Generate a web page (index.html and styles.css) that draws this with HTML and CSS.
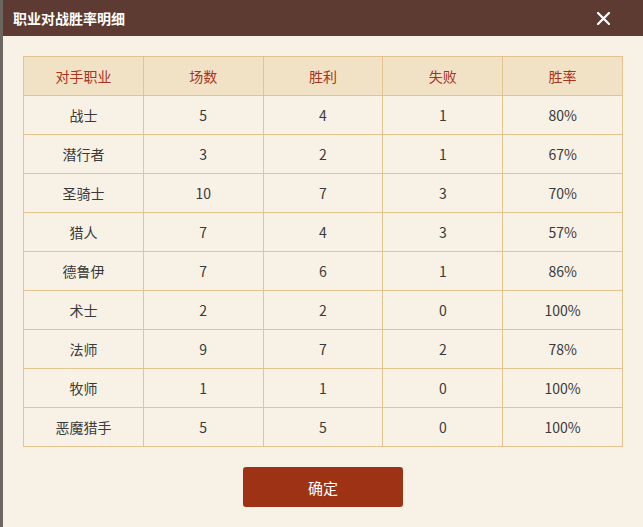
FILE: index.html
```html
<!DOCTYPE html>
<html lang="zh">
<head>
<meta charset="utf-8">
<link rel="stylesheet" href="styles.css">
</head>
<body>
<div class="page">
  <div class="backdrop"></div>
  <div class="dialog">
    <div class="dialog-head">
      <span class="title">职业对战胜率明细</span>
      <svg class="close" width="13" height="13" viewBox="0 0 13 13"><path d="M1 1L12 12M12 1L1 12" stroke="#fff" stroke-width="2.2" stroke-linecap="square"/></svg>
    </div>
    <div class="dialog-body">
      <table class="stats">
        <thead>
          <tr><th>对手职业</th><th>场数</th><th>胜利</th><th>失败</th><th>胜率</th></tr>
        </thead>
        <tbody>
          <tr><td>战士</td><td>5</td><td>4</td><td>1</td><td>80%</td></tr>
          <tr><td>潜行者</td><td>3</td><td>2</td><td>1</td><td>67%</td></tr>
          <tr><td>圣骑士</td><td>10</td><td>7</td><td>3</td><td>70%</td></tr>
          <tr><td>猎人</td><td>7</td><td>4</td><td>3</td><td>57%</td></tr>
          <tr><td>德鲁伊</td><td>7</td><td>6</td><td>1</td><td>86%</td></tr>
          <tr><td>术士</td><td>2</td><td>2</td><td>0</td><td>100%</td></tr>
          <tr><td>法师</td><td>9</td><td>7</td><td>2</td><td>78%</td></tr>
          <tr><td>牧师</td><td>1</td><td>1</td><td>0</td><td>100%</td></tr>
          <tr><td>恶魔猎手</td><td>5</td><td>5</td><td>0</td><td>100%</td></tr>
        </tbody>
      </table>
      <div class="actions"><button class="ok">确定</button></div>
    </div>
  </div>
</div>
</body>
</html>
```
FILE: styles.css
```css
html, body {
  margin: 0;
  padding: 0;
  height: 100%;
  overflow: hidden;
  background: #6b6660;
  font-family: "Microsoft YaHei", "Noto Sans CJK SC", "Noto Sans", sans-serif;
}
.page {
  display: flex;
  height: 527px;
}
.backdrop {
  width: 3px;
  flex: none;
  background: #6b6660;
}
.dialog {
  width: 640px;
  flex: none;
  background: #f8f1e6;
  display: flex;
  flex-direction: column;
}
.dialog-head {
  height: 36px;
  background: #5d3a32;
  display: flex;
  align-items: center;
  justify-content: space-between;
  padding: 0 33px 0 10px;
}
.title {
  color: #fff;
  font-size: 14px;
  font-weight: bold;
  letter-spacing: 0;
}
.close {
  display: block;
}
.dialog-body {
  padding: 20px 20px 0 20px;
}
.stats {
  width: 600px;
  border-collapse: collapse;
  table-layout: fixed;
  font-size: 14px;
}
.stats th, .stats td {
  border: 1px solid #e3c38e;
  height: 38px;
  padding: 0;
  text-align: center;
  font-weight: normal;
}
.stats th {
  background: #f2e2c5;
  color: #a8331f;
}
.stats td {
  color: #3a3a3a;
}
.actions {
  display: flex;
  justify-content: center;
  padding-top: 20px;
}
.ok {
  width: 160px;
  height: 40px;
  border: none;
  border-radius: 3px;
  background: #9e3214;
  color: #fff;
  font-family: inherit;
  font-size: 15px;
}
```
